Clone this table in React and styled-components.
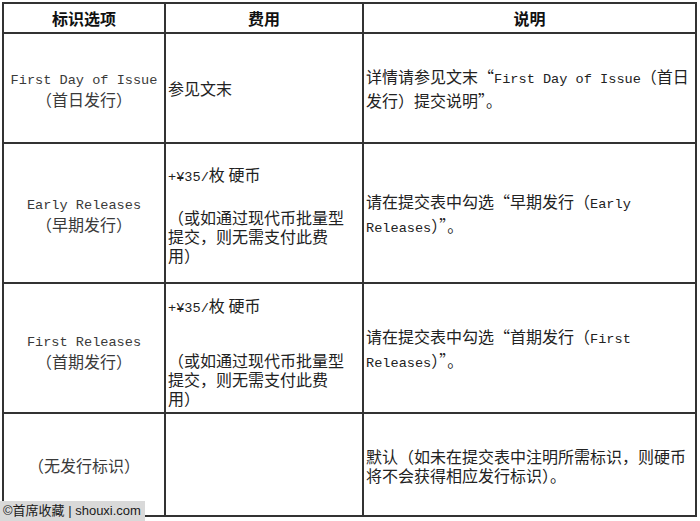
import styled, { createGlobalStyle } from 'styled-components'

const GlobalStyle = createGlobalStyle`
  html, body {
    margin: 0;
    padding: 0;
    background: #ffffff;
  }
  * { box-sizing: border-box; }
`

const Page = styled.div`
  position: relative;
  width: 700px;
  height: 521px;
  padding: 2px 0 0 2px;
  overflow: hidden;
  font-family: "Noto Sans CJK SC", "Liberation Sans", sans-serif;
  color: #222;
`

const Sheet = styled.div`
  display: grid;
  grid-template-columns: 162px 198px 333px;
  grid-template-rows: 30px 110px 140px 130px 103px;
  border-top: 2px solid #333;
  border-left: 2px solid #333;
  width: 695px;
`

const Cell = styled.div`
  display: flex;
  flex-direction: column;
  justify-content: center;
  align-items: ${({ $center }) => ($center ? 'center' : 'flex-start')};
  text-align: ${({ $center }) => ($center ? 'center' : 'left')};
  padding: ${({ $shift }) => $shift || 0}px 0 0 ${({ $center }) => ($center ? 0 : 2)}px;
  border-right: 2px solid #333;
  border-bottom: 2px solid #333;
  font-size: 16px;
  line-height: ${({ $lh }) => $lh || 19}px;
  color: ${({ $muted }) => ($muted ? '#3a3a3a' : '#222')};
  white-space: nowrap;
`

const HeadCell = styled(Cell)`
  font-weight: 700;
  color: #111;
  padding-top: 1px;
`

const Line = styled.div``

const Note = styled.div`
  margin-top: ${({ $gap }) => $gap}px;
`

const Latin = styled.span`
  font-family: "Liberation Mono", "DejaVu Sans Mono", monospace;
  font-size: 13.6px;
`

const Watermark = styled.div`
  position: absolute;
  left: 0;
  bottom: 0;
  height: 20px;
  width: 145px;
  padding-left: 3px;
  background: #d9d9d9;
  color: #1a1a1a;
  font-family: "Liberation Sans", "Noto Sans CJK SC", sans-serif;
  font-size: 13px;
  line-height: 20px;
  white-space: nowrap;
`

function FeeCell({ gap, shift }) {
  return (
    <Cell $lh={19} $shift={shift}>
      <Line><Latin>+¥35/</Latin>枚 硬币</Line>
      <Note $gap={gap}>
        <Line>（或如通过现代币批量型</Line>
        <Line>提交，则无需支付此费</Line>
        <Line>用）</Line>
      </Note>
    </Cell>
  )
}

export default function App() {
  return (
    <>
      <GlobalStyle />
      <Page>
        <Sheet>
          <HeadCell $center>标识选项</HeadCell>
          <HeadCell $center>费用</HeadCell>
          <HeadCell $center>说明</HeadCell>

          <Cell $center $muted>
            <Line><Latin>First Day of Issue</Latin></Line>
            <Line>（首日发行）</Line>
          </Cell>
          <Cell>参见文末</Cell>
          <Cell $lh={20}>
            <Line>详情请参见文末“<Latin>First Day of Issue</Latin>（首日</Line>
            <Line>发行）提交说明”。</Line>
          </Cell>

          <Cell $center $muted>
            <Line><Latin>Early Releases</Latin></Line>
            <Line>（早期发行）</Line>
          </Cell>
          <FeeCell gap={21} shift={4} />
          <Cell $lh={20} $shift={3}>
            <Line>请在提交表中勾选“早期发行（<Latin>Early</Latin></Line>
            <Line><Latin>Releases</Latin>）”。</Line>
          </Cell>

          <Cell $center $muted $shift={4}>
            <Line><Latin>First Releases</Latin></Line>
            <Line>（首期发行）</Line>
          </Cell>
          <FeeCell gap={33} shift={8} />
          <Cell $lh={20} $shift={4}>
            <Line>请在提交表中勾选“首期发行（<Latin>First</Latin></Line>
            <Line><Latin>Releases</Latin>）”。</Line>
          </Cell>

          <Cell $center $muted $shift={2}>（无发行标识）</Cell>
          <Cell />
          <Cell $lh={19} $shift={2}>
            <Line>默认（如未在提交表中注明所需标识，则硬币</Line>
            <Line>将不会获得相应发行标识）。</Line>
          </Cell>
        </Sheet>
        <Watermark>©首席收藏 | shouxi.com</Watermark>
      </Page>
    </>
  )
}
